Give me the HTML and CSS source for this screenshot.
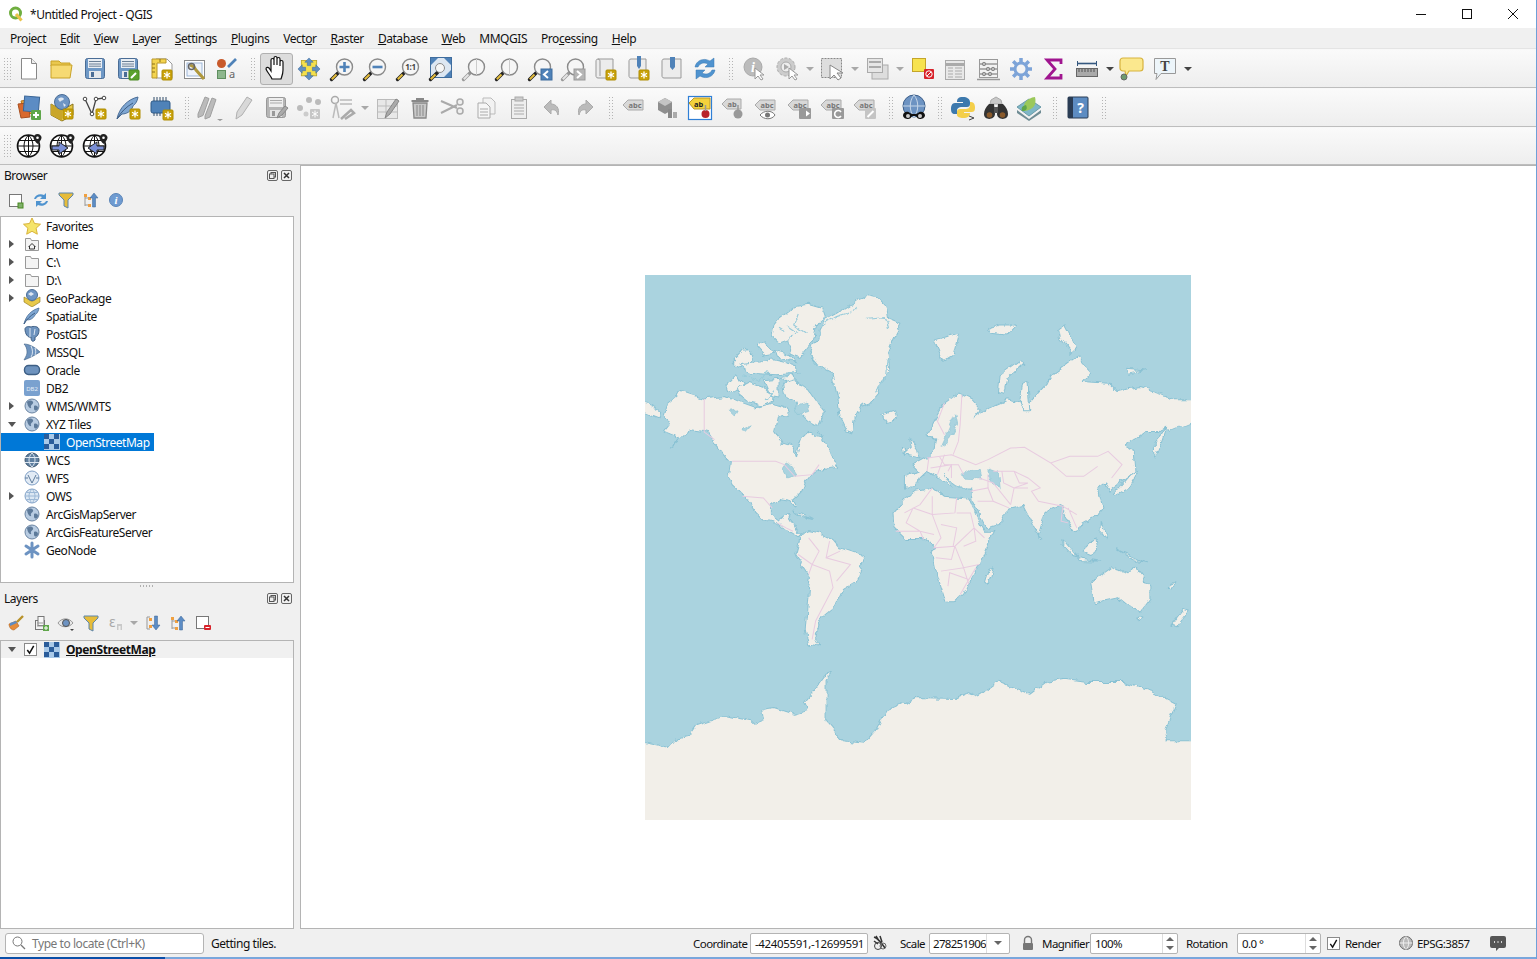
FILE: index.html
```html
<!DOCTYPE html>
<html lang="en">
<head>
<meta charset="utf-8">
<title>*Untitled Project - QGIS</title>
<link rel="stylesheet" href="styles.css">
</head>
<body>
<svg class="defs" aria-hidden="true">
<defs>
<filter id="rough" filterUnits="userSpaceOnUse" x="-20" y="-20" width="1608" height="1678"><feTurbulence type="fractalNoise" baseFrequency=".035" numOctaves="4" seed="7" result="n"/><feDisplacementMap in="SourceGraphic" in2="n" scale="20" xChannelSelector="R" yChannelSelector="G"/></filter>
<g id="star"><rect x="0" y="0" width="10" height="10" rx="1" fill="#c9a20a" stroke="#b08e05"/><path d="M5 1.500v7M2 3.200l6 3.600M8 3.200l-6 3.600" stroke="#fff" stroke-width="1.300"/></g>
<g id="flop"><rect x="4.500" y="3.500" width="19" height="20" rx="2" fill="#6e98c6" stroke="#4a6d96"/><rect x="7" y="4" width="14" height="9" fill="#e9eef4"/><path d="M8 6.500h12M8 9h12M8 11.200h12" stroke="#6a7f96"/><rect x="8" y="16" width="12" height="7" fill="#e4e8ec"/><rect x="10" y="17" width="3" height="5" fill="#4a6d96"/></g>
<g id="flopG"><rect x="4.500" y="3.500" width="19" height="20" rx="2" fill="#b5b5b5" stroke="#999"/><rect x="7" y="4" width="14" height="9" fill="#eee"/><path d="M8 6.500h12M8 9h12" stroke="#aaa"/><rect x="8" y="16" width="12" height="7" fill="#e4e4e4"/><rect x="10" y="17" width="3" height="5" fill="#999"/></g>
<g id="hdl"><path d="M10.500 17.500 3.500 24.500" stroke="#222" stroke-width="3.400" stroke-linecap="round"/><path d="M8.500 19.500 3.800 24.200" stroke="#e3bc3c" stroke-width="2"/></g>
<g id="hdlG"><path d="M10.500 17.500 3.500 24.500" stroke="#999" stroke-width="3.400" stroke-linecap="round"/><path d="M8.500 19.500 3.800 24.200" stroke="#e4e4e4" stroke-width="2"/></g>
<circle id="lens" cx="16.500" cy="12" r="8" fill="#f6f6f6" stroke="#8a8a8a" stroke-width="1.400"/>
<g id="abc"><path d="M3 11 8 6H23V16H8Z" fill="#d8d8d8" stroke="#aaa"/><text class="ic-t" x="8.500" y="13.800" fill="#777">abc</text></g>
<g id="ab"><path d="M3 10 8 5H22V15H8Z" fill="#d8d8d8" stroke="#aaa"/><text class="ic-t" x="8.500" y="12.800" fill="#777">ab</text></g>
<g id="earth"><circle cx="9" cy="9" r="7" fill="#b8cce2" stroke="#6a84a2"/><path d="M4 5c2-2 5-2 6 0s-3 3-2 5-3 2-4-5zM11 9c2-1 4 0 4 2s-3 4-4 1z" fill="#5d7a9a"/></g>
<g id="osm"><rect x="1" y="1" width="16" height="16" fill="#a9c9e8"/><path d="M1 1h5v5H1zM11 1h5v5h-5zM6 6h5v5H6zM1 11h5v5H1zM11 11h5v5h-5z" fill="#2a5c9a"/></g>
<g id="blk"><circle cx="13.500" cy="14" r="11" fill="#fff" stroke="#111" stroke-width="1.600"/><path d="M2.500 14h22M13.500 3c-6 6-6 16 0 22M13.500 3c6 6 6 16 0 22M4 8.500h19M4 19.500h19M13.500 3v22" stroke="#111" fill="none"/><path d="M22.500 2c-2.400 0-4 1.800-4 3.800 0 2.600 4 6.200 4 6.200s4-3.600 4-6.200C26.500 3.800 24.900 2 22.500 2z" fill="#222"/><circle cx="22.500" cy="5.800" r="1.300" fill="#fff"/></g>
</defs>
</svg>

<div class="app">
  <header class="titlebar">
    <svg class="logo" viewBox="0 0 16 16"><circle cx="7.500" cy="7" r="5" fill="none" stroke="#6fae3f" stroke-width="3"/><path d="M8 8l5.500 6.500" stroke="#e9c349" stroke-width="3"/></svg>
    <span class="title-text">*Untitled Project - QGIS</span>
    <div class="winbtns">
      <span class="winbtn"><svg viewBox="0 0 12 12" class="w12"><path d="M1 6.500h10" stroke="#111" fill="none"/></svg></span>
      <span class="winbtn"><svg viewBox="0 0 12 12" class="w12"><rect x="1.500" y="1.500" width="9" height="9" stroke="#111" fill="none"/></svg></span>
      <span class="winbtn"><svg viewBox="0 0 12 12" class="w12"><path d="M1 1l10 10M11 1 1 11" stroke="#111" fill="none"/></svg></span>
    </div>
  </header>

  <nav class="menubar">
    <span class="menu">Project</span><span class="menu"><u>E</u>dit</span><span class="menu"><u>V</u>iew</span><span class="menu"><u>L</u>ayer</span><span class="menu"><u>S</u>ettings</span><span class="menu"><u>P</u>lugins</span><span class="menu">Vect<u>o</u>r</span><span class="menu"><u>R</u>aster</span><span class="menu"><u>D</u>atabase</span><span class="menu"><u>W</u>eb</span><span class="menu">MMQGIS</span><span class="menu">Pro<u>c</u>essing</span><span class="menu"><u>H</u>elp</span>
  </nav>

  <div class="toolbar">
    <i class="grip"></i>
    <span class="tb"><svg viewBox="0 0 28 28"><path d="M6.500 3.500h10l5 5v15.500h-15z" fill="#fff" stroke="#888"/><path d="M16.500 3.500v5h5" fill="#eee" stroke="#888"/></svg></span>
    <span class="tb"><svg viewBox="0 0 28 28"><path d="M3 8V6h8l2 2h9v3H3z" fill="#e9c74e" stroke="#c9a227"/><path d="M3 23V10h21l-2 13z" fill="#f6da73" stroke="#c9a227"/></svg></span>
    <span class="tb"><svg viewBox="0 0 28 28"><use href="#flop"/></svg></span>
    <span class="tb"><svg viewBox="0 0 28 28"><use href="#flop"/><rect x="15" y="15" width="10" height="10" rx="1" fill="#5aa02c" stroke="#4a8a22"/><path d="M17 23l5-5" stroke="#fff" stroke-width="2"/></svg></span>
    <span class="tb"><svg viewBox="0 0 28 28"><path d="M9 4h11l5 5v14H9z" fill="#fff" stroke="#999"/><path d="M5 4h14v4h-9v15H5z" fill="#f4d44e" stroke="#b9972a"/><path d="M5 9h3M5 13h3M5 17h3M13 4v3" stroke="#8a701a"/><use href="#star" x="15" y="15"/></svg></span>
    <span class="tb"><svg viewBox="0 0 28 28"><rect x="4.500" y="5.500" width="20" height="18" fill="#fff" stroke="#8a8a8a"/><rect x="7" y="8" width="15" height="13" fill="#eef3fa" stroke="#9db6d6"/><path d="M10 10l4 2 2 3 8 9" stroke="#b0983c" stroke-width="3" fill="none"/><circle cx="11.500" cy="11.500" r="3" fill="none" stroke="#666" stroke-width="1.500"/></svg></span>
    <span class="tb"><svg viewBox="0 0 28 28"><circle cx="8.500" cy="8.500" r="4.500" fill="#c8592b"/><path d="M15 12l8-8" stroke="#4f82b8" stroke-width="2.600"/><rect x="4.500" y="15.500" width="8" height="8" fill="#8db78d" stroke="#5f8f5f"/><text class="ic-a" x="16" y="23">a</text></svg></span>
    <i class="grip"></i>
    <span class="tb on"><svg viewBox="0 0 28 28"><path d="M10 24c-1-3-5-7-6-10 0-2 2-2 3-1l2 3V5c0-2 3-2 3 0v5-7c0-2 3-2 3 0v7-6c0-2 3-2 3 0v7-4c0-2 3-2 3 0v8c0 4-1 6-2 9z" fill="#fff" stroke="#111" stroke-width="1.200"/></svg></span>
    <span class="tb"><svg viewBox="0 0 28 28"><g transform="translate(2.100 2.100) scale(.85)"><rect x="5" y="4" width="18" height="18" fill="#f5e04a" stroke="#b9a52a"/><path d="M14 1l-5 5h3v4h4V6h3zM14 27l-5-5h3v-4h4v4h3zM1 14l5-5v3h4v4H6v3zM27 14l-5-5v3h-4v4h4v3z" fill="#5f8fc2" stroke="#3e6a9a" stroke-width=".6"/></g></svg></span>
    <span class="tb"><svg viewBox="0 0 28 28"><use href="#hdl"/><use href="#lens"/><path d="M11.500 12h10M16.500 7v10" stroke="#4f82b8" stroke-width="2.600"/></svg></span>
    <span class="tb"><svg viewBox="0 0 28 28"><use href="#hdl"/><use href="#lens"/><path d="M11.500 12h10" stroke="#4f82b8" stroke-width="2.600"/></svg></span>
    <span class="tb"><svg viewBox="0 0 28 28"><use href="#hdl"/><use href="#lens"/><text class="ic-11" x="16.500" y="15">1:1</text></svg></span>
    <span class="tb"><svg viewBox="0 0 28 28"><rect x="3.500" y="2.500" width="21" height="20" fill="#dde7f2" stroke="#3f6d9e"/><path d="M4 3h7l-7 7zM24 3h-7l7 7zM24 22h-7l7-7z" fill="#4f82b8"/><use href="#hdl"/><circle cx="13" cy="13" r="4.500" fill="#f6f6f6" stroke="#8a8a8a"/></svg></span>
    <span class="tb"><svg viewBox="0 0 28 28"><use href="#hdlG"/><use href="#lens"/><path d="M16.500 4v16" stroke="#ccc"/></svg></span>
    <span class="tb"><svg viewBox="0 0 28 28"><use href="#hdl"/><use href="#lens"/><path d="M16.500 4v16" stroke="#ccc"/></svg></span>
    <span class="tb"><svg viewBox="0 0 28 28"><use href="#hdl"/><use href="#lens"/><rect x="15" y="14" width="11" height="11" fill="#4f82b8" stroke="#3f6d9e"/><path d="M22 16l-4 3.500 4 3.500" stroke="#fff" stroke-width="2" fill="none"/></svg></span>
    <span class="tb"><svg viewBox="0 0 28 28"><use href="#hdlG"/><use href="#lens"/><rect x="15" y="14" width="11" height="11" fill="#b5b5b5" stroke="#999"/><path d="M18 16l4 3.500-4 3.500" stroke="#fff" stroke-width="2" fill="none"/></svg></span>
    <span class="tb"><svg viewBox="0 0 28 28"><path d="M6 4h15v19H6c-2 0-2-2-2-2V6s0-2 2-2z" fill="#ececec" stroke="#999"/><path d="M6 4c2 0 2 2 2 3v14" fill="none" stroke="#999"/><use href="#star" x="14" y="15"/></svg></span>
    <span class="tb"><svg viewBox="0 0 28 28"><path d="M6 4h15v19H6c-2 0-2-2-2-2V6s0-2 2-2z" fill="#ececec" stroke="#999"/><path d="M12 1h4v10l-2 3-2-3z" fill="#4f82b8"/><use href="#star" x="14" y="15"/></svg></span>
    <span class="tb"><svg viewBox="0 0 28 28"><path d="M6 4h17v19H6c-2 0-2-2-2-2V6s0-2 2-2z" fill="#ececec" stroke="#999"/><path d="M12 2h5v10l-2.500 3-2.500-3z" fill="#4f82b8"/></svg></span>
    <span class="tb"><svg viewBox="0 0 28 28"><path d="M4 12c1-6 8-10 15-6l4-3v9h-9l3-3c-4-2-8-1-10 3zM24 15c-1 6-8 10-15 6l-4 3v-9h9l-3 3c4 2 8 1 10-3z" fill="#4f93cf" stroke="#3a78b0" stroke-width=".5"/></svg></span>
    <i class="grip"></i>
    <span class="tb"><svg viewBox="0 0 28 28"><circle cx="13" cy="12" r="9" fill="#bbb" stroke="#aaa"/><text class="ic-i" x="11" y="17">i</text><path d="M15 13v11l3-3 3 4 2-1-3-4h4z" fill="#fff" stroke="#999"/></svg></span>
    <span class="tb"><svg viewBox="0 0 28 28"><circle cx="13" cy="12" r="9" fill="#ccc" stroke="#aaa" stroke-dasharray="3 1.500"/><circle cx="13" cy="12" r="5" fill="#eee" stroke="#aaa"/><path d="M11 9l5 3-5 3z" fill="#aaa"/><path d="M16 13v11l3-3 3 4 2-1-3-4h4z" fill="#fff" stroke="#999"/></svg></span>
    <i class="dd"></i>
    <span class="tb"><svg viewBox="0 0 28 28"><rect x="3.500" y="3.500" width="20" height="19" fill="#ddd" stroke="#888" stroke-dasharray="2 1"/><path d="M12 10v14l4-4 4 5 3-2-4-5h6z" fill="#fff" stroke="#888"/></svg></span>
    <i class="dd"></i>
    <span class="tb"><svg viewBox="0 0 28 28"><rect x="9" y="10" width="16" height="14" fill="#ddd" stroke="#aaa"/><rect x="4.500" y="3.500" width="15" height="14" fill="#e6e6e6" stroke="#aaa"/><path d="M6 7h12M6 12h12" stroke="#aaa" stroke-width="2"/></svg></span>
    <i class="dd"></i>
    <span class="tb"><svg viewBox="0 0 28 28"><rect x="4.500" y="3.500" width="13" height="13" fill="#f7e34f" stroke="#c4a52a"/><rect x="16" y="14" width="10" height="10" rx="1" fill="#d7222a"/><circle cx="21" cy="19" r="3.200" fill="none" stroke="#fff"/><path d="M19 21l4-4" stroke="#fff"/></svg></span>
    <span class="tb"><svg viewBox="0 0 28 28"><rect x="4.500" y="5.500" width="19" height="19" fill="#e8e8e8" stroke="#aaa"/><path d="M5 9.500h18" stroke="#aaa" stroke-width="3"/><path d="M7 13h5M14 13h7M7 16h5M14 16h7M7 19h5M14 19h7M7 22h5M14 22h7" stroke="#aaa"/></svg></span>
    <span class="tb"><svg viewBox="0 0 28 28"><rect x="5.500" y="4.500" width="18" height="18" fill="#f2f2f2" stroke="#999"/><path d="M6 9h17M6 14h17M6 19h17M3 24.500h23" stroke="#999" stroke-width="1.400"/><circle cx="10" cy="9" r="1.700" fill="#bbb" stroke="#888"/><circle cx="14" cy="14" r="1.700" fill="#bbb" stroke="#888"/><circle cx="19" cy="14" r="1.700" fill="#bbb" stroke="#888"/><circle cx="10" cy="19" r="1.700" fill="#bbb" stroke="#888"/><circle cx="16" cy="19" r="1.700" fill="#bbb" stroke="#888"/></svg></span>
    <span class="tb"><svg viewBox="0 0 28 28"><circle cx="14" cy="14" r="6" fill="none" stroke="#7da4d8" stroke-width="3"/><path d="M14 3v5M14 20v5M3 14h5M20 14h5M6.200 6.200l3.500 3.500M18.300 18.300l3.500 3.500M21.800 6.200 18.300 9.700M9.700 18.300l-3.500 3.500" stroke="#7da4d8" stroke-width="3.500"/></svg></span>
    <span class="tb"><svg viewBox="0 0 28 28"><path d="M21 9V5H7l8 9-8 9h14v-4" fill="none" stroke="#a0158f" stroke-width="2.800"/></svg></span>
    <span class="tb"><svg viewBox="0 0 28 28"><path d="M4 8.500h20" stroke="#35587f" stroke-width="1.600"/><path d="M4.500 6v5M23.500 6v5" stroke="#35587f"/><rect x="3.500" y="13.500" width="21" height="8" fill="#aaa" stroke="#666"/><path d="M6 14v3M9 14v3M12 14v3M15 14v3M18 14v3M21 14v3" stroke="#555"/></svg></span>
    <i class="dd dk"></i>
    <span class="tb"><svg viewBox="0 0 28 28"><path d="M5 3h17a3 3 0 0 1 3 3v7a3 3 0 0 1-3 3H11l-3 5-1-5H5a3 3 0 0 1-3-3V6a3 3 0 0 1 3-3z" fill="#fbe88e" stroke="#d7b33e" stroke-width="1.200"/><circle cx="6" cy="22" r="3" fill="#6f9a6e" stroke="#666"/></svg></span>
    <span class="tb"><svg viewBox="0 0 28 28"><path d="M3.500 3.500h21v15H10l-5 6 1-6H3.500z" fill="#edf5fa" stroke="#999"/><text class="ic-T" x="14" y="15.500">T</text></svg></span>
    <i class="dd dk"></i>
  </div>

  <div class="toolbar">
    <i class="grip"></i>
    <span class="tb"><svg viewBox="0 0 28 28"><path d="M6 7l11-2 4 13-11 3z" fill="#eea33a" stroke="#b8761c"/><path d="M3 10l10-1 2 14-9 1z" fill="#d9692e" stroke="#a84f20"/><rect x="9" y="2.500" width="15" height="15" fill="#5c8cc4" stroke="#3a6596" transform="rotate(5 16 10)"/><rect x="16" y="16" width="10" height="10" rx="1" fill="#5fa64a"/><path d="M21 18v6M18 21h6" stroke="#fff" stroke-width="2"/></svg></span>
    <span class="tb"><svg viewBox="0 0 28 28"><path d="M3 10 14 16l11-6v11l-11 6-11-6z" fill="#e8c94a" stroke="#8a7418"/><path d="M3 10l11 6v11L3 21z" fill="#c9a62a"/><circle cx="14" cy="8" r="7.500" fill="#6e95c4" stroke="#4a6d96"/><path d="M10 5c2-2 5-2 6 0-1 2-3 1-4 3zM15 9l3 2-2 2z" fill="#dfe8f2"/><use href="#star" x="15" y="15"/></svg></span>
    <span class="tb"><svg viewBox="0 0 28 28"><path d="M4 5l7 15 4-15 8-1" fill="none" stroke="#444" stroke-width="1.300"/><circle cx="4" cy="5" r="1.800" fill="#fff" stroke="#444"/><circle cx="15" cy="5" r="1.800" fill="#fff" stroke="#444"/><circle cx="23" cy="4" r="1.800" fill="#fff" stroke="#444"/><circle cx="11" cy="20" r="1.800" fill="#fff" stroke="#444"/><use href="#star" x="15" y="15"/></svg></span>
    <span class="tb"><svg viewBox="0 0 28 28"><path d="M3 25C5 14 14 5 24 3c-1 6-4 8-5 9-2 6-7 8-11 8z" fill="#7ea6d2" stroke="#4a6d96"/><path d="M3 25c4-7 9-12 16-16" stroke="#3f5f85" fill="none"/><use href="#star" x="16" y="15"/></svg></span>
    <span class="tb"><svg viewBox="0 0 28 28"><rect x="4" y="7" width="19" height="12" rx="2" fill="#4f82b8" stroke="#2f5a88"/><path d="M7 3v4M10 3v4M13 3v4M16 3v4M19 3v4M7 19v3M10 19v3M13 19v3" stroke="#2f4a68"/><use href="#star" x="16" y="16"/></svg></span>
    <i class="grip"></i>
    <span class="tb"><svg viewBox="0 0 28 28"><path d="M2 20 9 3l4 1.500-6 17-5 2zM9 22l7-18 4 1.500-6 17.500-5 2z" fill="#bbb" stroke="#a0a0a0"/><path d="M21 25l3 2 3-2z" fill="#999"/></svg></span>
    <span class="tb"><svg viewBox="0 0 28 28"><path d="M7 25l1-7L18 3l5 3-10 15z" fill="#d8d8d8" stroke="#b0b0b0"/></svg></span>
    <span class="tb"><svg viewBox="0 0 28 28"><use href="#flopG"/><path d="M15 24l2-5 6-7 3 2-6 7z" fill="#aaa" stroke="#888"/></svg></span>
    <span class="tb"><svg viewBox="0 0 28 28"><circle cx="14" cy="6" r="3" fill="#bbb"/><circle cx="5" cy="14" r="3" fill="#bbb"/><circle cx="23" cy="8" r="3" fill="#bbb"/><circle cx="11" cy="20" r="2.500" fill="#ccc"/><rect x="15" y="15" width="10" height="10" rx="1" fill="#c6c6c6"/><path d="M20 16.500v7M17 18l6 4M23 18l-6 4" stroke="#fff"/></svg></span>
    <span class="tb"><svg viewBox="0 0 28 28"><circle cx="7" cy="6" r="3.500" fill="none" stroke="#aaa" stroke-width="1.500"/><path d="M8 9l3 15M5 24l3-15M12 6h12M12 10h12" stroke="#bbb" stroke-width="1.500"/><path d="M13 25l10-9 3 3-9 6" stroke="#aaa" stroke-width="2.500" fill="none"/></svg></span>
    <i class="dd"></i>
    <span class="tb"><svg viewBox="0 0 28 28"><rect x="4.500" y="5.500" width="20" height="19" fill="#e8e8e8" stroke="#bbb"/><path d="M5 12h19M5 18h19M13 5v19" stroke="#bbb"/><path d="M12 24l2-6 9-13 3 2-9 13z" fill="#aaa" stroke="#888"/></svg></span>
    <span class="tb"><svg viewBox="0 0 28 28"><path d="M7 9h14l-1 15H8z" fill="#c8c8c8" stroke="#888" stroke-width="1.300"/><path d="M5.500 7h17M10 5h8" stroke="#888" stroke-width="2"/><path d="M11 11v11M14 11v11M17 11v11" stroke="#888"/></svg></span>
    <span class="tb"><svg viewBox="0 0 28 28"><path d="M2 7l16 7M2 19l16-8" stroke="#aaa" stroke-width="2"/><circle cx="21" cy="8" r="3" fill="#eee" stroke="#aaa" stroke-width="1.500"/><circle cx="21" cy="17" r="3" fill="#eee" stroke="#aaa" stroke-width="1.500"/></svg></span>
    <span class="tb"><svg viewBox="0 0 28 28"><path d="M11 4h8l4 4v12H11z" fill="#f2f2f2" stroke="#bbb"/><path d="M6 9h8l4 4v11H6z" fill="#f6f6f6" stroke="#aaa"/><path d="M8 15h8M8 18h8M8 21h8" stroke="#aaa"/></svg></span>
    <span class="tb"><svg viewBox="0 0 28 28"><rect x="6.500" y="5.500" width="15" height="19" fill="#eee" stroke="#aaa"/><rect x="10" y="3" width="8" height="4" fill="#ccc" stroke="#aaa"/><path d="M9 11h10M9 14h10M9 17h10M9 20h10" stroke="#aaa"/></svg></span>
    <span class="tb"><svg viewBox="0 0 28 28"><path d="M13 5 6 12l7 7v-4c4-1 6 1 7 5 2-7-2-11-7-11z" fill="#bbb" stroke="#aaa" transform="translate(0 1)"/></svg></span>
    <span class="tb"><svg viewBox="0 0 28 28"><path d="M15 5l7 7-7 7v-4c-4-1-6 1-7 5-2-7 2-11 7-11z" fill="#bbb" stroke="#aaa" transform="translate(0 1)"/></svg></span>
    <i class="grip"></i>
    <span class="tb"><svg viewBox="0 0 28 28"><use href="#abc"/></svg></span>
    <span class="tb"><svg viewBox="0 0 28 28"><path d="M5 8l7-4 7 4v8l-7 4-7-4z" fill="#8e8e8e"/><path d="M5 8l7 4 7-4-7-4z" fill="#c4c4c4"/><rect x="15" y="15" width="4" height="9" fill="#888"/><rect x="20" y="18" width="4" height="6" fill="#aaa"/></svg></span>
    <span class="tb"><svg viewBox="0 0 28 28"><rect x="2.500" y="2.500" width="23" height="23" fill="#fff" stroke="#2f7fd6" stroke-width="1.200"/><path d="M3 9l5-5h16v11H8z" fill="#f4d23c" stroke="#b9972a"/><text class="ic-t" x="8" y="12.500" fill="#222">ab</text><circle cx="19.500" cy="20" r="4" fill="#b8232a"/><path d="M19.500 11v6" stroke="#999" stroke-width="1.500"/></svg></span>
    <span class="tb"><svg viewBox="0 0 28 28"><use href="#ab"/><circle cx="19" cy="20" r="4.500" fill="#999"/><path d="M19 11v6" stroke="#999" stroke-width="1.500"/></svg></span>
    <span class="tb"><svg viewBox="0 0 28 28"><use href="#abc"/><path d="M8 21c4-5 12-5 15 0-3 5-11 5-15 0z" fill="#fff" stroke="#777"/><circle cx="15.500" cy="21" r="2.500" fill="#777"/></svg></span>
    <span class="tb"><svg viewBox="0 0 28 28"><use href="#abc"/><rect x="14" y="14" width="12" height="11" rx="1" fill="#999"/><path d="M16 19.500h5v-3l4 3-4 3v-3" fill="#fff"/></svg></span>
    <span class="tb"><svg viewBox="0 0 28 28"><use href="#abc"/><rect x="14" y="14" width="12" height="11" rx="1" fill="#999"/><path d="M23 22a3.500 3.500 0 1 1 0-4" fill="none" stroke="#fff" stroke-width="1.600"/></svg></span>
    <span class="tb"><svg viewBox="0 0 28 28"><use href="#abc"/><rect x="14" y="14" width="11" height="11" rx="1" fill="#c4c4c4"/><path d="M16.500 23l6-6" stroke="#fff" stroke-width="2"/></svg></span>
    <i class="grip"></i>
    <span class="tb"><svg viewBox="0 0 28 28"><circle cx="14" cy="12" r="11" fill="#6d93c2" stroke="#3d5f8a"/><path d="M3 12h22M14 1c-5 6-5 16 0 22M14 1c5 6 5 16 0 22" stroke="#c6d6e8" fill="none"/><path d="M3 21c1-4 5-4 7-2l2 1h4l2-1c2-2 6-2 7 2 0 3-3 4-5 4s-3-1-4-3h-4c-1 2-2 3-4 3s-5-1-5-4z" fill="#111"/><circle cx="8" cy="22" r="2" fill="#ccc"/><circle cx="20" cy="22" r="2" fill="#ccc"/></svg></span>
    <i class="grip"></i>
    <span class="tb"><svg viewBox="0 0 28 28"><path d="M14 3c-5 0-6 2-6 5h6v1H6c-3 0-4 3-4 6s1 5 4 5h2v-3c0-3 2-4 5-4h5c2 0 3-1 3-3V8c0-3-3-5-7-5z" fill="#3d79ad"/><path d="M14 24c5 0 7-2 7-5h-6v-1h8c3 0 3-3 3-5s-1-5-4-5h-1v3c0 3-2 4-5 4h-5c-2 0-3 1-3 3v3c0 2 3 3 6 3z" fill="#f4cf4a"/><path d="M20 22l5 2-5 2" fill="none" stroke="#444"/></svg></span>
    <span class="tb"><svg viewBox="0 0 28 28"><path d="M8 10l1-4 5-3 5 3 1 4z" fill="#c8c8c8" stroke="#aaa"/><path d="M12 10H7c-3 3-5 6-5 10 0 7 11 6 11 0zM16 10h5c3 3 5 6 5 10 0 7-11 6-11 0z" fill="#333"/><rect x="12" y="13" width="4" height="6" fill="#555"/><circle cx="7.500" cy="21" r="2.800" fill="#8a5a2b"/><circle cx="20.500" cy="21" r="2.800" fill="#8a5a2b"/></svg></span>
    <span class="tb"><svg viewBox="0 0 28 28"><path d="M14 5 2 13l12 9 12-9z" fill="#7eb6c6" stroke="#6a9aa8"/><path d="M2 16l12 9 12-9v3L14 27 2 19z" fill="#6f8c94"/><path d="M9 17c-2-7 3-13 11-14 2 8-2 13-11 14z" fill="#9bc85a"/><path d="M7 17c-1-3 0-5 4-6 2 4 0 6-4 6z" fill="#5fa64a"/></svg></span>
    <i class="grip"></i>
    <span class="tb"><svg viewBox="0 0 28 28"><rect x="4" y="3" width="20" height="21" rx="1" fill="#5d8cc2" stroke="#2a3c54"/><rect x="4" y="3" width="5" height="21" fill="#2a3c54"/><text class="ic-q" x="16.500" y="19">?</text></svg></span>
    <i class="grip"></i>
  </div>

  <div class="toolbar third">
    <i class="grip"></i>
    <span class="tb"><svg viewBox="0 0 28 28"><use href="#blk"/></svg></span>
    <span class="tb"><svg viewBox="0 0 28 28"><use href="#blk"/><path d="M4 14h7v-4l9 6-9 6v-4H4z" fill="#7a8fd6" stroke="#222"/></svg></span>
    <span class="tb"><svg viewBox="0 0 28 28"><use href="#blk"/><path d="M23 14h-7v-4l-9 6 9 6v-4h7z" fill="#7a8fd6" stroke="#222"/></svg></span>
  </div>

  <main class="workspace">
    <aside class="docks">
      <section class="dock browser">
        <div class="dock-title"><span>Browser</span><span class="dock-btns"><svg class="dbtn" viewBox="0 0 11 11"><rect x=".5" y=".5" width="10" height="10" rx="1.500" fill="none" stroke="#666"/><rect x="4" y="2.500" width="4.500" height="4.500" fill="none" stroke="#555"/><rect x="2.500" y="4" width="4.500" height="4.500" fill="#eee" stroke="#555"/></svg><svg class="dbtn" viewBox="0 0 11 11"><rect x=".5" y=".5" width="10" height="10" rx="1.500" fill="none" stroke="#666"/><path d="M3 3l5 5M8 3 3 8" stroke="#333" stroke-width="1.500"/></svg></span></div>
        <div class="dock-tools">
          <span class="dt"><svg viewBox="0 0 18 18"><rect x="2.500" y="3.500" width="12" height="12" fill="#fff" stroke="#777"/><rect x="11" y="12" width="5" height="5" fill="#7fb069" stroke="#4a8a22"/></svg></span>
          <span class="dt"><svg viewBox="0 0 18 18"><path d="M2 8c1-4 6-6 10-4l2-2v6H8l2-2c-3-1-5 0-6 2zM16 10c-1 4-6 6-10 4l-2 2v-6h6l-2 2c3 1 5 0 6-2z" fill="#4f93cf"/></svg></span>
          <span class="dt"><svg viewBox="0 0 18 18"><path d="M2 2h14v2l-5 5v8l-4-2V9L2 4z" fill="#e6bc3a" stroke="#5d86ac"/></svg></span>
          <span class="dt"><svg viewBox="0 0 18 18"><path d="M3 4v11M3 7h5M3 14h5" stroke="#999" fill="none"/><rect x="2" y="3" width="3" height="3" fill="#f0a040"/><rect x="6" y="6" width="3" height="3" fill="#f0a040"/><rect x="6" y="13" width="3" height="3" fill="#f0a040"/><path d="M12 2 8 7h2.500v9h3V7H16z" fill="#5c8cc4" stroke="#3a6596" stroke-width=".5"/></svg></span>
          <span class="dt"><svg viewBox="0 0 18 18"><circle cx="9" cy="9" r="6.500" fill="#6f9bd1" stroke="#5a85b8"/><text class="ic-nfo" x="9" y="13">i</text></svg></span>
        </div>
        <div class="tree browser-tree">
          <div class="row"><i class="arr"></i><svg class="ico" viewBox="0 0 18 18"><path d="M9 1l2.500 5.500 6 .7-4.400 4 1.200 6L9 14.300 3.700 17.200l1.200-6-4.400-4 6-.7z" fill="#f5e46a" stroke="#d8b23a"/></svg><span class="lab">Favorites</span></div>
          <div class="row"><i class="arr r"></i><svg class="ico" viewBox="0 0 18 18"><path d="M2.500 3.500h5l1 2h7v10h-13z" fill="#f4f4f4" stroke="#999"/><path d="M5.500 12 9 8.500l3.500 3.500M6.500 11v3h5v-3" fill="none" stroke="#333"/></svg><span class="lab">Home</span></div>
          <div class="row"><i class="arr r"></i><svg class="ico" viewBox="0 0 18 18"><path d="M2.500 3.500h5l1 2h7v10h-13z" fill="#f4f4f4" stroke="#999"/></svg><span class="lab">C:\</span></div>
          <div class="row"><i class="arr r"></i><svg class="ico" viewBox="0 0 18 18"><path d="M2.500 3.500h5l1 2h7v10h-13z" fill="#f4f4f4" stroke="#999"/></svg><span class="lab">D:\</span></div>
          <div class="row"><i class="arr r"></i><svg class="ico" viewBox="0 0 18 18"><path d="M1 8l8 4.500L17 8v5l-8 5-8-5z" fill="#e8c94a" stroke="#8a7418" stroke-width=".6"/><circle cx="9" cy="6" r="5.500" fill="#6e95c4" stroke="#4a6d96"/><path d="M5 5l3-2 3 2-3 2z" fill="#dfe8f2"/></svg><span class="lab">GeoPackage</span></div>
          <div class="row"><i class="arr"></i><svg class="ico" viewBox="0 0 18 18"><path d="M1 17C3 8 9 3 16 1c-1 5-3 6-4 7-2 4-5 5-9 5z" fill="#7ea6d2" stroke="#4a6d96" stroke-width=".8"/><path d="M1 17c3-5 6-8 11-11" stroke="#3f5f85" fill="none"/></svg><span class="lab">SpatiaLite</span></div>
          <div class="row"><i class="arr"></i><svg class="ico" viewBox="0 0 18 18"><path d="M2 4c0-2 3-3 6-2 2-1 8-1 8 3 0 4-2 7-4 7v3c-3 3-4 0-4-3-3 1-6-3-6-8z" fill="#6e93be" stroke="#3e5f85"/><path d="M7 3v9M12 4l-1 6" stroke="#dbe6f2" fill="none"/></svg><span class="lab">PostGIS</span></div>
          <div class="row"><i class="arr"></i><svg class="ico" viewBox="0 0 18 18"><path d="M1 1c5 0 11 3 16 8-5 3-10 6-16 8 2-4 3-5 3-8S3 3 1 1z" fill="#6e93be" stroke="#3e5f85" stroke-width=".6"/><path d="M8 3c2 4 2 8 0 11M12 5c1 3 1 5 0 7" stroke="#dbe6f2" fill="none"/></svg><span class="lab">MSSQL</span></div>
          <div class="row"><i class="arr"></i><svg class="ico" viewBox="0 0 18 18"><rect x="1.500" y="4.500" width="15" height="9" rx="4" fill="#6e93be" stroke="#3e5f85" stroke-width="1.400"/></svg><span class="lab">Oracle</span></div>
          <div class="row"><i class="arr"></i><svg class="ico" viewBox="0 0 18 18"><rect x="1" y="1" width="16" height="16" rx="2" fill="#7aa1cf"/><text class="ic-db2" x="9" y="11.500">DB2</text></svg><span class="lab">DB2</span></div>
          <div class="row"><i class="arr r"></i><svg class="ico" viewBox="0 0 18 18"><use href="#earth"/></svg><span class="lab">WMS/WMTS</span></div>
          <div class="row"><i class="arr d"></i><svg class="ico" viewBox="0 0 18 18"><use href="#earth"/></svg><span class="lab">XYZ Tiles</span></div>
          <div class="row child sel"><svg class="ico" viewBox="0 0 18 18"><use href="#osm"/></svg><span class="lab">OpenStreetMap</span></div>
          <div class="row"><i class="arr"></i><svg class="ico" viewBox="0 0 18 18"><circle cx="9" cy="9" r="7" fill="#5f7f9f" stroke="#3e5770"/><path d="M2 6.500h14M2 11.500h14M9 2c-4 4-4 10 0 14M9 2c4 4 4 10 0 14" stroke="#dfe8f2" fill="none"/></svg><span class="lab">WCS</span></div>
          <div class="row"><i class="arr"></i><svg class="ico" viewBox="0 0 18 18"><circle cx="9" cy="9" r="7" fill="#e2ebf5" stroke="#7f9fc6"/><path d="M5 6l4 8 4-8M2 9h3M13 9h3" stroke="#5d7a9a" fill="none"/></svg><span class="lab">WFS</span></div>
          <div class="row"><i class="arr r"></i><svg class="ico" viewBox="0 0 18 18"><circle cx="9" cy="9" r="7" fill="#dbe7f3" stroke="#7f9fc6"/><path d="M2 9h14M3 5.500h12M3 12.500h12M9 2c-4 4-4 10 0 14M9 2c4 4 4 10 0 14" stroke="#9cb8d6" fill="none"/></svg><span class="lab">OWS</span></div>
          <div class="row"><i class="arr"></i><svg class="ico" viewBox="0 0 18 18"><use href="#earth"/></svg><span class="lab">ArcGisMapServer</span></div>
          <div class="row"><i class="arr"></i><svg class="ico" viewBox="0 0 18 18"><use href="#earth"/></svg><span class="lab">ArcGisFeatureServer</span></div>
          <div class="row"><i class="arr"></i><svg class="ico" viewBox="0 0 18 18"><path d="M9 2v14M3 5l12 8M15 5 3 13" stroke="#6d93c2" stroke-width="3" stroke-linecap="round"/></svg><span class="lab">GeoNode</span></div>
        </div>
      </section>
      <div class="hsplit"><i class="dots"></i></div>
      <section class="dock layers">
        <div class="dock-title"><span>Layers</span><span class="dock-btns"><svg class="dbtn" viewBox="0 0 11 11"><rect x=".5" y=".5" width="10" height="10" rx="1.500" fill="none" stroke="#666"/><rect x="4" y="2.500" width="4.500" height="4.500" fill="none" stroke="#555"/><rect x="2.500" y="4" width="4.500" height="4.500" fill="#eee" stroke="#555"/></svg><svg class="dbtn" viewBox="0 0 11 11"><rect x=".5" y=".5" width="10" height="10" rx="1.500" fill="none" stroke="#666"/><path d="M3 3l5 5M8 3 3 8" stroke="#333" stroke-width="1.500"/></svg></span></div>
        <div class="dock-tools ltools">
          <span class="dt"><svg viewBox="0 0 18 18"><path d="M2 10l7-3 3 5-5 4c-3 0-5-3-5-6z" fill="#e58c3a" stroke="#b36520" stroke-width=".6"/><path d="M3 9l6-2 1 2-7 3z" fill="#5c8cc4"/><path d="M10 8l6-6" stroke="#b8922a" stroke-width="2.400"/></svg></span>
          <span class="dt"><svg viewBox="0 0 18 18"><rect x="3.500" y="6.500" width="9" height="9" fill="#f2f2f2" stroke="#777"/><rect x="6" y="2.500" width="6" height="9" fill="#f8f8f8" stroke="#777"/><path d="M5 9h6M5 12h6" stroke="#999"/><rect x="11" y="11" width="6" height="6" fill="#5fa64a"/><path d="M14 12v4M12 14h4" stroke="#fff"/></svg></span>
          <span class="dt"><svg viewBox="0 0 18 18"><path d="M1 9c3-5 11-6 15 0-4 5-12 5-15 0z" fill="#e8e8e8" stroke="#999"/><circle cx="9" cy="9" r="3.500" fill="#6d93c2" stroke="#555"/><path d="M13 15l2 2 2-2z" fill="#444"/></svg></span>
          <span class="dt"><svg viewBox="0 0 18 18"><path d="M2 2h14v2l-5 5v8l-4-2V9L2 4z" fill="#e6bc3a" stroke="#5d86ac"/></svg></span>
          <span class="dt"><svg class="eps" viewBox="0 0 18 18"><text class="ic-eps" x="2" y="13">ε</text><path d="M10 10h5v6h-1.500v-4h-2v4H10z" fill="#c9c9c9"/></svg></span>
          <i class="dd sm"></i>
          <span class="dt"><svg viewBox="0 0 18 18"><path d="M3 3h3M3 15h3M3 3v12" stroke="#999"/><rect x="5" y="4" width="3" height="3" fill="#f0a040"/><rect x="5" y="11" width="3" height="3" fill="#f0a040"/><path d="M12 16 8 11h2.500V2h3v9H16z" fill="#5c8cc4" stroke="#3a6596" stroke-width=".5"/></svg></span>
          <span class="dt"><svg viewBox="0 0 18 18"><path d="M3 4v11M3 7h5M3 14h5" stroke="#999" fill="none"/><rect x="2" y="3" width="3" height="3" fill="#f0a040"/><rect x="6" y="6" width="3" height="3" fill="#f0a040"/><rect x="6" y="13" width="3" height="3" fill="#f0a040"/><path d="M12 2 8 7h2.500v9h3V7H16z" fill="#5c8cc4" stroke="#3a6596" stroke-width=".5"/></svg></span>
          <span class="dt"><svg viewBox="0 0 18 18"><rect x="2.500" y="2.500" width="12" height="12" fill="#fff" stroke="#777"/><rect x="10" y="11" width="7" height="5" rx="1" fill="#d7222a"/><path d="M11.500 13.500h4" stroke="#fff"/></svg></span>
        </div>
        <div class="tree layer-tree">
          <div class="row layer-row"><i class="arr d"></i><i class="check big"><svg viewBox="0 0 12 12"><path d="M2.500 6.500 5 10l4.500-8" fill="none" stroke="#111" stroke-width="1.700"/></svg></i><svg class="ico" viewBox="0 0 18 18"><use href="#osm"/></svg><span class="lab strong">OpenStreetMap</span></div>
        </div>
      </section>
    </aside>
    <div class="vsplit"></div>
    <section class="canvas">
      <svg class="tile" viewBox="0 0 1568 1638" preserveAspectRatio="none">
        <rect class="sea" width="1568" height="1638"/>
        <g class="land">
          <path d="M620 72 640 65 670 72 695 100 700 130 735 145 715 185 695 235 700 290 680 320 670 360 650 385 620 395 600 435 595 472 578 465 560 425 555 380 545 335 535 290 495 270 470 240 480 210 500 190 500 165 515 135 550 115 580 95 600 88Z"/>
          <path d="M385 130 430 95 470 88 510 100 518 125 490 150 480 200 445 245 420 235 410 195 385 205 365 185 370 150Z"/>
          <path d="M250 265 290 220 310 240 300 270 265 280Z"/>
          <path d="M325 215 345 200 370 235 345 240Z"/>
          <path d="M370 225 420 240 435 258 385 252Z"/>
          <path d="M235 330 260 300 285 325 265 350 240 345Z"/>
          <path d="M270 270 340 260 370 255 430 270 440 295 380 300 300 295Z"/>
          <path d="M265 340 300 320 340 335 370 375 345 395 300 385 270 360Z"/>
          <path d="M340 315 385 310 385 370 360 365Z"/>
          <path d="M392 308 420 302 445 325 405 322Z"/>
          <path d="M395 325 430 315 470 345 500 390 515 410 495 455 470 440 445 415 430 380 400 360Z"/>
          <path d="M55 425 65 385 105 350 170 372 230 365 275 385 315 400 365 385 400 395 415 420 380 430 372 470 395 505 425 515 435 545 440 520 450 490 470 470 490 485 510 490 500 470 530 530 540 560 555 575 520 580 495 590 480 600 460 625 450 650 425 675 435 695 430 700 415 680 385 675 360 690 360 720 385 740 410 720 425 745 440 780 455 775 440 790 410 770 380 745 340 735 310 705 285 665 250 630 240 600 245 565 225 540 195 500 180 475 165 470 130 465 100 495 70 520 100 490 55 470 70 450Z"/>
          <path d="M420 712 450 718 480 735 450 725Z"/>
          <path d="M-8 385 20 395 45 410 40 430 15 420 -8 410Z"/>
          <path d="M435 830 445 790 470 768 500 775 540 795 560 820 630 845 630 850 610 920 570 945 550 990 515 1020 500 1045 490 1095 500 1115 470 1110 460 1065 470 935 475 910 430 840Z"/>
          <path d="M712 715 745 675 775 650 830 640 860 665 930 670 950 720 975 770 1005 770 980 820 960 870 935 915 915 960 885 985 865 985 850 935 835 885 825 830 830 820 800 795 750 795 715 760Z"/>
          <path d="M1000 880 985 935 975 925 985 890Z"/>
          <path d="M745 640 745 605 790 590 770 570 805 550 830 525 835 495 810 480 830 440 860 385 900 355 940 375 965 405 945 430 985 400 1040 375 1075 385 1095 395 1150 330 1175 295 1240 245 1280 290 1255 320 1330 325 1355 350 1420 335 1480 355 1520 375 1578 375 1578 440 1510 470 1495 455 1475 470 1440 470 1380 515 1405 530 1410 590 1370 620 1345 640 1335 650 1320 625 1300 640 1315 700 1300 720 1255 745 1250 770 1235 775 1215 745 1190 690 1150 710 1130 780 1110 740 1085 690 1045 700 1020 750 980 760 940 680 935 640 900 640 880 625 860 600 880 640 845 610 810 590 790 610 775 640Z"/>
          <path d="M760 490 785 525 790 550 745 540 765 520Z"/>
          <path d="M742 520 755 525 745 542Z"/>
          <path d="M680 420 720 408 725 430 690 440Z"/>
          <path d="M830 195 900 175 885 240 855 260Z"/>
          <path d="M980 165 1020 150 1065 150 1040 180 990 175Z"/>
          <path d="M1015 350 1020 300 1080 255 1085 265 1040 310 1030 355Z"/>
          <path d="M1075 385 1085 325 1100 320 1105 405 1090 405Z"/>
          <path d="M1185 165 1205 150 1240 220 1225 235 1190 190Z"/>
          <path d="M1380 280 1435 285 1390 295Z"/>
          <path d="M1498 455 1480 510 1465 550 1462 500Z"/>
          <path d="M1350 665 1390 640 1420 590 1395 600 1345 660Z"/>
          <path d="M1200 795 1245 850 1230 845 1200 810Z"/>
          <path d="M1258 830 1295 790 1300 830 1280 840Z"/>
          <path d="M1245 850 1310 860 1250 858Z"/>
          <path d="M1355 825 1440 865 1400 855Z"/>
          <path d="M1310 740 1330 790 1310 780Z"/>
          <path d="M1130 782 1140 790 1132 792Z"/>
          <path d="M1280 925 1340 880 1390 895 1405 875 1450 935 1450 975 1425 1010 1390 995 1360 970 1290 985Z"/>
          <path d="M1415 1025 1430 1028 1422 1040Z"/>
          <path d="M1545 1005 1560 1010 1525 1057 1510 1053Z"/>
          <path d="M1500 945 1512 925 1522 925 1510 945Z"/>
          <path d="M-30 1400 70 1420 95 1390 125 1385 145 1355 230 1325 305 1340 315 1350 340 1340 335 1305 370 1300 430 1320 465 1310 455 1285 490 1240 515 1205 535 1195 520 1215 520 1340 570 1400 630 1407 665 1365 695 1310 780 1270 890 1273 930 1255 955 1265 1015 1220 1105 1260 1150 1225 1205 1215 1270 1225 1375 1225 1450 1250 1525 1290 1495 1365 1500 1400 1598 1400 1598 1668 -30 1668Z"/>
        </g>
        <g class="inland">
          <path d="M905 600 930 585 960 590 965 610 925 608Z"/>
          <path d="M990 580 1015 590 1020 640 995 625Z"/>
          <path d="M890 420 870 470 850 515 865 510 885 470 895 445Z"/>
          <path d="M405 565 425 575 440 600 410 610 395 580Z"/>
          <path d="M240 410 265 405 255 425Z"/>
          <path d="M280 465 305 450 290 468Z"/>
          <path d="M430 395 465 385 470 410 440 420Z"/>
        </g>
        <g class="fjords">
          <path d="M405 150 440 175 410 190M440 120 430 150 465 175M385 160 400 170"/>
          <path d="M510 150 550 125 580 115 605 100M640 130 690 125 700 165M660 355 690 315 695 260"/>
          <path d="M285 300 330 320 350 290M400 310 430 290M345 375 370 345"/>
        </g>
        <g class="borders">
          <path d="M170 372V472L200 495M250 560H375L400 570 430 605 480 600 500 570"/>
          <path d="M280 665 340 670 365 700M380 745 405 760 425 770"/>
          <path d="M470 790 500 830 480 870 470 900M480 870 530 890 540 940 510 1000 490 1040 480 1095M530 800 520 850 590 870 550 920M440 840 480 870M520 850 560 830"/>
          <path d="M745 715 790 690 825 640M825 665 825 720 770 700M825 720 890 715 895 670M895 715 935 715 945 760M825 720 850 790 830 820 890 815 945 760 975 790M720 770 790 770 830 780M890 815 915 880 960 870M850 890 915 880 930 930M870 935 875 895 930 915 905 960M770 700 750 745 790 770M790 770 800 795M850 750 895 760 885 815M945 760 950 800 915 815M835 850 880 855 890 815M930 915 950 880"/>
          <path d="M985 555 1050 520 1090 518 1165 565 1220 545 1300 545 1330 530 1370 570 1340 610M1165 565 1210 605 1260 605 1300 575M1000 590 1060 590 1100 610 1135 640 1110 650 1130 680 1200 695 1240 720M1050 690 1060 640 1100 625M1215 700 1240 760M1025 590 1030 625 1060 640M1060 590 1075 625 1100 625M1100 640 1060 640M1200 695 1195 740 1215 745M935 650 985 640 1000 680 1045 700M955 680 1000 680"/>
          <path d="M860 385 840 440 860 480M910 360 905 450 900 500M810 550 880 540 950 570 985 555M820 580 880 570 880 610M860 540 840 600M960 610 1000 625 1050 690M985 600 985 640M900 500 885 540M845 545 860 570 900 570 915 600M880 570 870 590M810 590 815 550"/>
        </g>
      </svg>
    </section>
  </main>

  <footer class="statusbar">
    <div class="locator"><svg class="s16" viewBox="0 0 16 16"><circle cx="6.500" cy="6.500" r="4.500" fill="none" stroke="#777"/><path d="M10 10l4 4" stroke="#777" stroke-width="1.300"/></svg><span>Type to locate (Ctrl+K)</span></div>
    <span class="msg">Getting tiles.</span>
    <div class="st-right">
      <span class="st-coord">Coordinate</span>
      <span class="field f-coord">-42405591,-12699591</span>
      <span class="st-ico"><svg viewBox="0 0 18 18"><path d="M3 3c3 1 7 5 11 11M5 2l3 5M9 2l2 6M3 7l4 3" stroke="#333" stroke-width="1.500" fill="none"/><circle cx="7" cy="12" r="3.500" fill="none" stroke="#444"/><circle cx="12" cy="12" r="3" fill="none" stroke="#666"/></svg></span>
      <span class="st-scale">Scale</span>
      <span class="field f-scale"><span class="num">278251906</span><i class="combo"></i></span>
      <span class="st-lock"><svg viewBox="0 0 14 16"><path d="M3.500 8V5a3.500 3.500 0 0 1 7 0v3" fill="none" stroke="#777" stroke-width="1.400"/><rect x="2" y="8" width="10" height="7" rx="1" fill="#777"/></svg></span>
      <span class="st-mag">Magnifier</span>
      <span class="field f-mag"><span>100%</span><i class="spin"></i></span>
      <span class="st-rot">Rotation</span>
      <span class="field f-rot"><span>0.0 °</span><i class="spin"></i></span>
      <i class="check st-check"><svg viewBox="0 0 12 12"><path d="M2.500 6.500 5 10l4.500-8" fill="none" stroke="#111" stroke-width="1.500"/></svg></i>
      <span class="st-render">Render</span>
      <svg class="st-globe" viewBox="0 0 16 16"><circle cx="8" cy="8" r="6.500" fill="#bbb" stroke="#666"/><path d="M1.500 8h13M8 1.500c-3.500 3-3.500 10 0 13M8 1.500c3.500 3 3.500 10 0 13" stroke="#eee" fill="none"/></svg>
      <span class="st-epsg">EPSG:3857</span>
      <svg class="st-bubble" viewBox="0 0 18 18"><path d="M3 2h12a2 2 0 0 1 2 2v8a2 2 0 0 1-2 2h-5l-3 3v-3H3a2 2 0 0 1-2-2V4a2 2 0 0 1 2-2z" fill="#555"/><path d="M5 8h1M8.500 8h1M12 8h1" stroke="#fff" stroke-width="1.600"/></svg>
    </div>
  </footer>
  <div class="winedge"></div>
</div>
</body>
</html>
```

FILE: styles.css
```css
* { box-sizing: border-box; }
html, body { margin: 0; height: 100%; overflow: hidden; }
body {
  font-family: "Noto Sans", "Open Sans", sans-serif;
  font-size: 12px;
  letter-spacing: -0.45px;
  color: #111;
  background: #f0f0f0;
}
.defs { position: absolute; width: 0; height: 0; }
.app { height: 959px; display: flex; flex-direction: column; border-right: 1px solid #6fa0d8; }

.titlebar { height: 28px; background: #fff; display: flex; align-items: center; padding-left: 8px; flex: none; }
.logo { width: 16px; height: 16px; margin-right: 6px; }
.title-text { font-size: 12px; }
.winbtns { margin-left: auto; display: flex; }
.winbtn { width: 46px; height: 28px; display: flex; align-items: center; justify-content: center; }
.w12 { width: 12px; height: 12px; }

.menubar { height: 21px; flex: none; background: #f0f0f0; display: flex; align-items: center; padding-left: 3px; border-bottom: 1px solid #e4e4e4; }
.menu { padding: 0 7px; white-space: nowrap; }

.toolbar { height: 39px; flex: none; display: flex; align-items: center; padding-left: 3px; background: linear-gradient(#fafafa, #eeeeee); border-bottom: 1px solid #bdbdbd; border-top: 1px solid #f8f8f8; }
.toolbar.third { height: 38px; }
.tb { width: 33px; height: 32px; flex: none; display: flex; align-items: center; justify-content: center; border: 1px solid transparent; }
.tb svg { width: 28px; height: 28px; flex: none; }
.tb.on { background: #dcdcdc; border-color: #b0b0b0; border-radius: 3px; }
.grip { width: 16px; flex: none; height: 24px; display: block; background-image: radial-gradient(circle, #b4b4b4 .7px, transparent .8px); background-size: 3px 3px; background-repeat: repeat; background-clip: content-box; padding: 0 5px; }
.grip:first-child { width: 9.5px; padding: 0 1px; }
.dd { width: 12px; flex: none; display: flex; align-items: center; justify-content: center; height: 10px; }
.dd::before { content: ""; border-left: 4px solid transparent; border-right: 4px solid transparent; border-top: 4px solid #a8a8a8; }
.dd.dk::before { border-top-color: #444; }
.dd.sm { width: 12px; }

.ic-t { font: 700 7.5px "Noto Sans", sans-serif; letter-spacing: 0; }
.ic-a { font: 400 11px "Noto Sans", sans-serif; fill: #666; letter-spacing: 0; }
.ic-11 { font: 700 8px "Noto Sans", sans-serif; fill: #444; text-anchor: middle; letter-spacing: -.3px; }
.ic-i { font: 700 italic 14px "Liberation Serif", serif; fill: #fff; letter-spacing: 0; }
.ic-T { font: 700 14px "Liberation Serif", serif; fill: #444; text-anchor: middle; letter-spacing: 0; }
.ic-q { font: 700 14px "Noto Sans", sans-serif; fill: #fff; text-anchor: middle; letter-spacing: 0; }
.ic-nfo { font: 700 italic 11px "Liberation Serif", serif; fill: #fff; text-anchor: middle; letter-spacing: 0; }
.ic-db2 { font: 400 6px "Noto Sans", sans-serif; fill: #e4edf7; text-anchor: middle; letter-spacing: 0; }
.ic-eps { font: 400 14px "Noto Sans", sans-serif; fill: #aaa; letter-spacing: 0; }

.workspace { flex: 1; min-height: 0; display: flex; }
.docks { width: 294px; flex: none; display: flex; flex-direction: column; }
.dock { display: flex; flex-direction: column; min-height: 0; }
.browser { flex: none; height: 418px; }
.layers { flex: 1; }
.dock-title { height: 21px; flex: none; display: flex; align-items: center; justify-content: space-between; padding: 0 2px 1px 4px; }
.layers .dock-title { height: 20px; }
.dock-btns { display: flex; gap: 3px; }
.dbtn { width: 11px; height: 11px; display: block; }
.dock-tools { height: 30px; flex: none; display: flex; align-items: center; padding: 0 0 2px 3px; }
.ltools { height: 31px; padding-bottom: 3px; }
.dt { width: 25px; height: 18px; flex: none; display: flex; justify-content: center; }
.dt svg { width: 18px; height: 18px; }
.dt .eps { overflow: visible; }
.tree { background: #fff; border: 1px solid #b4b4b4; flex: 1; min-height: 0; }
.row { height: 18px; display: flex; align-items: center; padding-left: 1px; white-space: nowrap; }
.arr { width: 21px; flex: none; display: flex; justify-content: center; padding-right: 2px; }
.arr.r::before { content: ""; border-top: 4px solid transparent; border-bottom: 4px solid transparent; border-left: 5px solid #555; }
.arr.d::before { content: ""; border-left: 4px solid transparent; border-right: 4px solid transparent; border-top: 5px solid #555; }
.ico { width: 18px; height: 18px; flex: none; }
.lab { margin-left: 5px; }
.row.child { padding-left: 42px; }
.row.sel { width: 153px; background: #0078d7; color: #fff; }
.hsplit { height: 6px; flex: none; display: flex; justify-content: center; align-items: center; }
.dots { width: 16px; height: 2px; background-image: radial-gradient(circle, #b0b0b0 .7px, transparent .8px); background-size: 3px 2px; }
.layer-row { background: #f0f0f0; height: 17px; }
.check { width: 13px; height: 13px; flex: none; background: #fff; border: 1px solid #8a8a8a; display: block; }
.check svg { display: block; width: 11px; height: 11px; }
.check.big { margin: 0 6px 0 2px; }
.layer-row .arr { padding-right: 0; width: 20px; }
.layer-row .lab { margin-left: 5px; }
.strong { font-weight: 700; text-decoration: underline; letter-spacing: -.4px; }

.vsplit { width: 6px; flex: none; }
.canvas { flex: 1; background: #fff; border: 1px solid #b4b4b4; border-right: 0; padding-right: 1px; display: flex; align-items: center; justify-content: center; min-width: 0; }
.tile { width: 546px; height: 545px; display: block; flex: none; }
.sea { fill: #aad3df; }
.land, .inland, .fjords { filter: url(#rough); }
.land path { fill: #f2efe9; stroke: #8ac2d4; stroke-width: 1px; vector-effect: non-scaling-stroke; stroke-linejoin: round; }
.inland path { fill: #aad3df; stroke: #8ac2d4; stroke-width: .6px; vector-effect: non-scaling-stroke; }
.fjords path { fill: none; stroke: #9accdb; stroke-width: 1.2px; vector-effect: non-scaling-stroke; }
.borders path { fill: none; stroke: #e8cbe0; stroke-width: 1px; vector-effect: non-scaling-stroke; }

.statusbar { height: 28px; flex: none; display: flex; align-items: center; padding-left: 5px; background: #f0f0f0; white-space: nowrap; }
.locator { width: 199px; height: 21px; flex: none; background: #fff; border: 1px solid #b4b4b4; border-radius: 3px; display: flex; align-items: center; color: #777; padding-left: 5px; }
.s16 { width: 16px; height: 16px; margin-right: 5px; flex: none; }
.msg { margin-left: 7px; }
.st-right { margin-left: auto; display: flex; align-items: center; padding-right: 29px; font-size: 11.5px; letter-spacing: -.55px; }
.field { height: 21px; flex: none; background: #fff; border: 1px solid #b4b4b4; border-radius: 2px; display: flex; align-items: center; justify-content: space-between; padding-left: 4px; }
.st-coord { width: 57px; }
.f-coord { width: 118px; letter-spacing: -.35px; }
.st-ico { width: 24px; display: flex; justify-content: center; }
.st-ico svg { width: 18px; height: 18px; }
.st-scale { margin-left: 8px; width: 29px; }
.f-scale { width: 81px; padding-left: 3px; }
.num { letter-spacing: -.7px; }
.st-lock { width: 32px; display: flex; justify-content: center; padding-left: 4px; }
.st-lock svg { width: 14px; height: 16px; }
.st-mag { width: 48px; }
.f-mag { width: 88px; }
.st-rot { margin-left: 8px; width: 51px; }
.f-rot { width: 84px; }
.combo { width: 24px; height: 19px; border-left: 1px solid #ddd; display: flex; align-items: center; justify-content: center; }
.combo::before { content: ""; border-left: 4px solid transparent; border-right: 4px solid transparent; border-top: 4px solid #666; }
.spin { width: 15px; height: 19px; border-left: 1px solid #ddd; position: relative; }
.spin::before, .spin::after { content: ""; position: absolute; left: 3px; border-left: 4px solid transparent; border-right: 4px solid transparent; }
.spin::before { top: 3px; border-bottom: 4px solid #666; }
.spin::after { bottom: 3px; border-top: 4px solid #666; }
.st-check { margin-left: 6px; }
.st-render { margin-left: 5px; width: 35px; }
.st-globe { width: 16px; height: 16px; margin-left: 18px; flex: none; }
.st-epsg { margin-left: 3px; width: 57px; }
.st-bubble { width: 18px; height: 18px; margin-left: 15px; flex: none; }
.winedge { height: 2px; flex: none; background: linear-gradient(90deg, #0a4fa8 0 165px, #7aa7dc 165px); }
```
